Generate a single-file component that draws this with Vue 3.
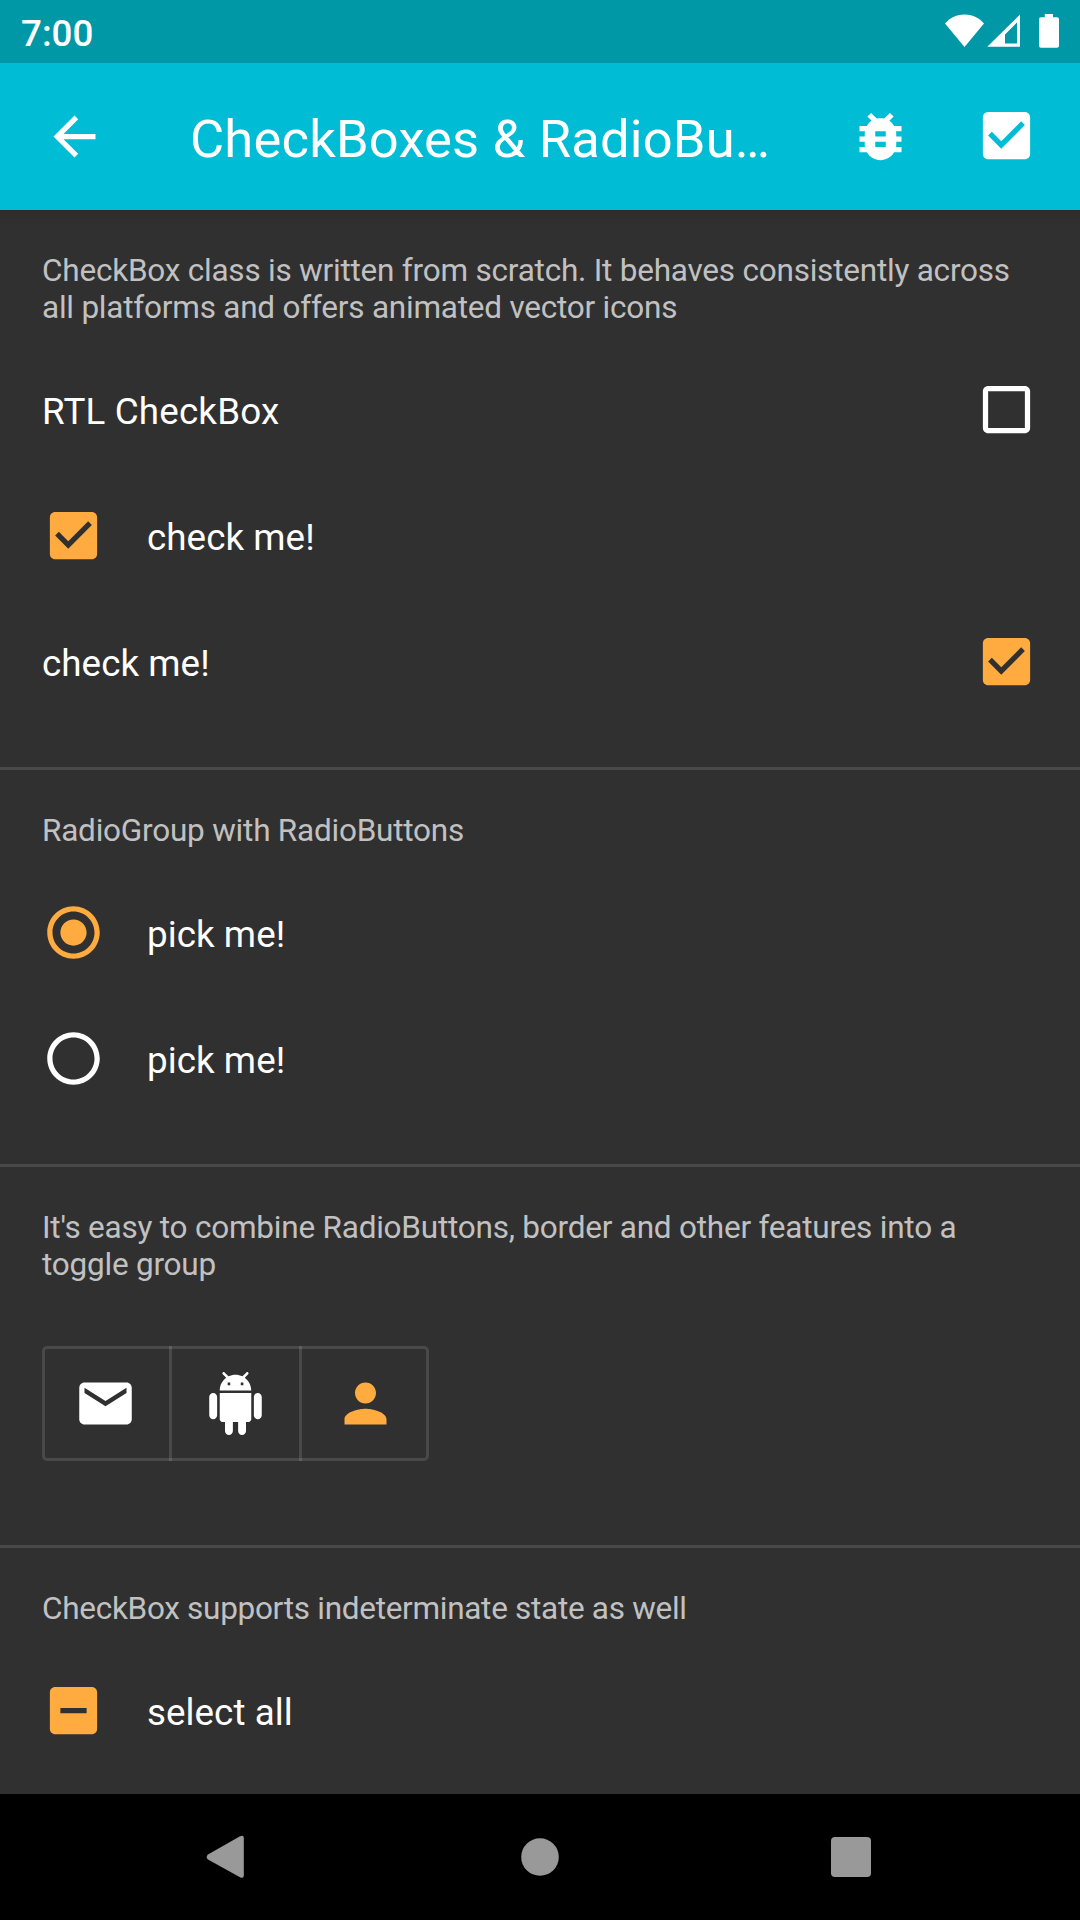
<script setup>
import { ref } from 'vue'

const paths = {
  arrow: 'M20 11H7.83l5.59-5.59L12 4l-8 8 8 8 1.41-1.41L7.83 13H20v-2z',
  bug: 'M20 8h-2.81c-.45-.78-1.07-1.45-1.82-1.96L17 4.41 15.59 3l-2.17 2.17C12.96 5.06 12.49 5 12 5c-.49 0-.96.06-1.41.17L8.41 3 7 4.41l1.62 1.63C7.88 6.55 7.26 7.22 6.81 8H4v2h2.09c-.05.33-.09.66-.09 1v1H4v2h2v1c0 .34.04.67.09 1H4v2h2.81c1.04 1.79 2.97 3 5.19 3s4.15-1.21 5.19-3H20v-2h-2.09c.05-.33.09-.66.09-1v-1h2v-2h-2v-1c0-.34-.04-.67-.09-1H20V8zm-6 8h-4v-2h4v2zm0-4h-4v-2h4v2z',
  checked: 'M19 3H5c-1.11 0-2 .9-2 2v14c0 1.1.89 2 2 2h14c1.11 0 2-.9 2-2V5c0-1.1-.89-2-2-2zm-9 14l-5-5 1.41-1.41L10 14.17l7.59-7.59L19 8l-9 9z',
  unchecked: 'M19 5v14H5V5h14m0-2H5c-1.1 0-2 .9-2 2v14c0 1.1.9 2 2 2h14c1.1 0 2-.9 2-2V5c0-1.1-.9-2-2-2z',
  indeterminate: 'M19 3H5c-1.1 0-2 .9-2 2v14c0 1.1.9 2 2 2h14c1.1 0 2-.9 2-2V5c0-1.1-.9-2-2-2zm-2 10H7v-2h10v2z',
  radioOn: 'M12 7c-2.76 0-5 2.24-5 5s2.24 5 5 5 5-2.24 5-5-2.24-5-5-5zm0-5C6.48 2 2 6.48 2 12s4.48 10 10 10 10-4.48 10-10S17.52 2 12 2zm0 18c-4.42 0-8-3.58-8-8s3.58-8 8-8 8 3.58 8 8-3.58 8-8 8z',
  radioOff: 'M12 2C6.48 2 2 6.48 2 12s4.48 10 10 10 10-4.48 10-10S17.52 2 12 2zm0 18c-4.42 0-8-3.58-8-8s3.58-8 8-8 8 3.58 8 8-3.58 8-8 8z',
  mail: 'M20 4H4c-1.1 0-1.99.9-1.99 2L2 18c0 1.1.9 2 2 2h16c1.1 0 2-.9 2-2V6c0-1.1-.9-2-2-2zm0 4l-8 5-8-5V6l8 5 8-5v2z',
  android: 'M6 18c0 .55.45 1 1 1h1v3.5c0 .83.67 1.5 1.5 1.5s1.5-.67 1.5-1.5V19h2v3.5c0 .83.67 1.5 1.5 1.5s1.5-.67 1.5-1.5V19h1c.55 0 1-.45 1-1V8H6v10zM3.500 8C2.670 8 2 8.670 2 9.500v7c0 .83.67 1.5 1.500 1.500S5 17.330 5 16.500v-7C5 8.670 4.330 8 3.500 8zm17 0c-.83 0-1.500.67-1.500 1.500v7c0 .83.67 1.500 1.500 1.500s1.500-.67 1.500-1.500v-7c0-.83-.67-1.500-1.500-1.500zm-4.970-5.840l1.300-1.300c.2-.2.2-.51 0-.71-.2-.2-.51-.2-.71 0l-1.480 1.480C13.850 1.230 12.950 1 12 1c-.96 0-1.860.23-2.660.63L7.850.15c-.2-.2-.51-.2-.71 0-.2.2-.2.51 0 .71l1.310 1.310C6.970 3.260 6 5.010 6 7h12c0-1.990-.97-3.750-2.470-4.840zM10 5H9V4h1v1zm5 0h-1V4h1v1z',
  person: 'M12 12c2.21 0 4-1.79 4-4s-1.79-4-4-4-4 1.79-4 4 1.79 4 4 4zm0 2c-2.67 0-8 1.34-8 4v2h16v-2c0-2.66-5.33-4-8-4z'
}

const rtlChecked = ref(false)
const firstChecked = ref(true)
const secondChecked = ref(true)
const picked = ref(0)
const toggles = ['mail', 'android', 'person']
const activeToggle = ref('person')
</script>

<template>
  <div class="screen">
    <div class="status">
      <span class="time">7:00</span>
      <svg class="status-icons" width="120" height="63" viewBox="0 0 120 63">
        <path d="M5 23.500C15 11.500 34 11.500 44 23.500L24.500 47z" />
        <path fill-rule="evenodd" d="M47.300 46.800L80 14.500V46.800zM65 43.400H77V22.600L65 34.500z" />
        <path d="M104.800 14H113V17.300H117Q119 17.300 119 19.300V45.700Q119 47.800 117 47.800H101Q99 47.800 99 45.700V19.300Q99 17.300 101 17.300H104.800z" />
      </svg>
    </div>

    <header class="toolbar">
      <svg class="icon back" viewBox="0 0 24 24"><path :d="paths.arrow" /></svg>
      <h1 class="title">CheckBoxes &amp; RadioBu…</h1>
      <svg class="icon bug" viewBox="0 0 24 24"><path :d="paths.bug" /></svg>
      <svg class="icon check" viewBox="0 0 24 24"><path :d="paths.checked" /></svg>
    </header>

    <main class="content">
      <section>
        <p class="desc">CheckBox class is written from scratch. It behaves consistently across<br>all platforms and offers animated vector icons</p>
        <div class="row rtl" @click="rtlChecked = !rtlChecked">
          <span class="label wide">RTL CheckBox</span>
          <svg class="icon" :class="{ accent: rtlChecked }" viewBox="0 0 24 24"><path :d="rtlChecked ? paths.checked : paths.unchecked" /></svg>
        </div>
        <div class="row" @click="firstChecked = !firstChecked">
          <svg class="icon" :class="{ accent: firstChecked }" viewBox="0 0 24 24"><path :d="firstChecked ? paths.checked : paths.unchecked" /></svg>
          <span class="label">check me!</span>
        </div>
        <div class="row rtl" @click="secondChecked = !secondChecked">
          <span class="label">check me!</span>
          <svg class="icon" :class="{ accent: secondChecked }" viewBox="0 0 24 24"><path :d="secondChecked ? paths.checked : paths.unchecked" /></svg>
        </div>
      </section>

      <section>
        <p class="desc">RadioGroup with RadioButtons</p>
        <div v-for="i in 2" :key="i" class="row" @click="picked = i - 1">
          <svg class="icon" :class="{ accent: picked === i - 1 }" viewBox="0 0 24 24"><path :d="picked === i - 1 ? paths.radioOn : paths.radioOff" /></svg>
          <span class="label">pick me!</span>
        </div>
      </section>

      <section class="toggle-section">
        <p class="desc">It's easy to combine RadioButtons, border and other features into a<br>toggle group</p>
        <div class="toggle-group">
          <template v-for="(name, i) in toggles" :key="name">
            <i v-if="i" class="separator"></i>
            <div class="toggle" @click="activeToggle = name">
              <svg class="icon" :class="{ accent: activeToggle === name }" viewBox="0 0 24 24"><path :d="paths[name]" /></svg>
            </div>
          </template>
        </div>
      </section>

      <section>
        <p class="desc tight">CheckBox supports indeterminate state as well</p>
        <div class="row">
          <svg class="icon accent" viewBox="0 0 24 24"><path :d="paths.indeterminate" /></svg>
          <span class="label">select all</span>
        </div>
      </section>
    </main>

    <nav class="navbar">
      <svg width="1080" height="126" viewBox="0 0 1080 126">
        <path d="M208 60.500L240 42.300Q243.800 40.500 243.800 44V81.500Q243.800 85 240 83.200L208 65.500Q205.300 63 208 60.500z" />
        <circle cx="540" cy="63" r="18.800" />
        <rect x="831" y="43" width="40" height="40" rx="4" />
      </svg>
    </nav>
  </div>
</template>

<style>
body {
  margin: 0;
  background: #303030;
}
</style>

<style scoped>
.screen {
  width: 1080px;
  height: 1920px;
  display: flex;
  flex-direction: column;
  overflow: hidden;
  background: #303030;
  color: #fff;
  font-family: Roboto, sans-serif;
}

svg {
  display: block;
  flex: none;
  fill: currentColor;
}

.icon {
  width: 63px;
  height: 63px;
}

.accent {
  color: #ffab40;
}

.status {
  height: 63px;
  flex: none;
  display: flex;
  justify-content: space-between;
  background: #0097a7;
}

.time {
  margin: 12px 0 0 21px;
  font-size: 36.75px;
  line-height: 43px;
  font-weight: 500;
}

.status-icons {
  margin-right: 20px;
}

.toolbar {
  height: 147px;
  flex: none;
  display: flex;
  align-items: flex-start;
  background: #00bcd4;
}

.back {
  margin: 42px 0 0 43px;
}

.title {
  width: 600px;
  margin: 45px 0 0 84px;
  font-size: 52.5px;
  line-height: 62px;
  font-weight: 400;
  letter-spacing: 0.18px;
  white-space: nowrap;
}

.bug {
  margin: 42px 0 0 59px;
}

.check {
  margin: 41px 0 0 63px;
}

.content {
  flex: 1;
  min-height: 0;
  background: linear-gradient(#2c2c2c, #303030 16px);
}

section {
  padding: 42px 42px 43px;
}

section + section {
  border-top: 3px solid #494949;
}

.desc {
  margin: 0 0 20px;
  font-size: 31.5px;
  line-height: 37px;
  letter-spacing: -0.22px;
  color: #c1c1c1;
  white-space: nowrap;
}

.desc.tight {
  letter-spacing: -0.29px;
}

.row {
  height: 126px;
  display: flex;
  align-items: flex-start;
  gap: 42px;
}

.row .icon {
  margin-top: 32px;
}

.rtl {
  justify-content: space-between;
}

.label {
  margin-top: 44px;
  font-size: 36.75px;
  line-height: 43px;
  letter-spacing: 0.06px;
}

.label.wide {
  letter-spacing: 0.18px;
}

.toggle-section {
  padding-bottom: 84px;
}

.toggle-group {
  width: 387px;
  height: 115px;
  margin-top: 63px;
  display: flex;
  border-radius: 5px;
  box-shadow: inset 0 0 0 3px rgba(255, 255, 255, 0.12);
}

.separator {
  width: 3px;
  background: rgba(255, 255, 255, 0.12);
}

.toggle {
  flex: 1;
  display: flex;
  align-items: center;
  justify-content: center;
}

.navbar {
  height: 126px;
  flex: none;
  background: #000;
  color: #999;
}
</style>
